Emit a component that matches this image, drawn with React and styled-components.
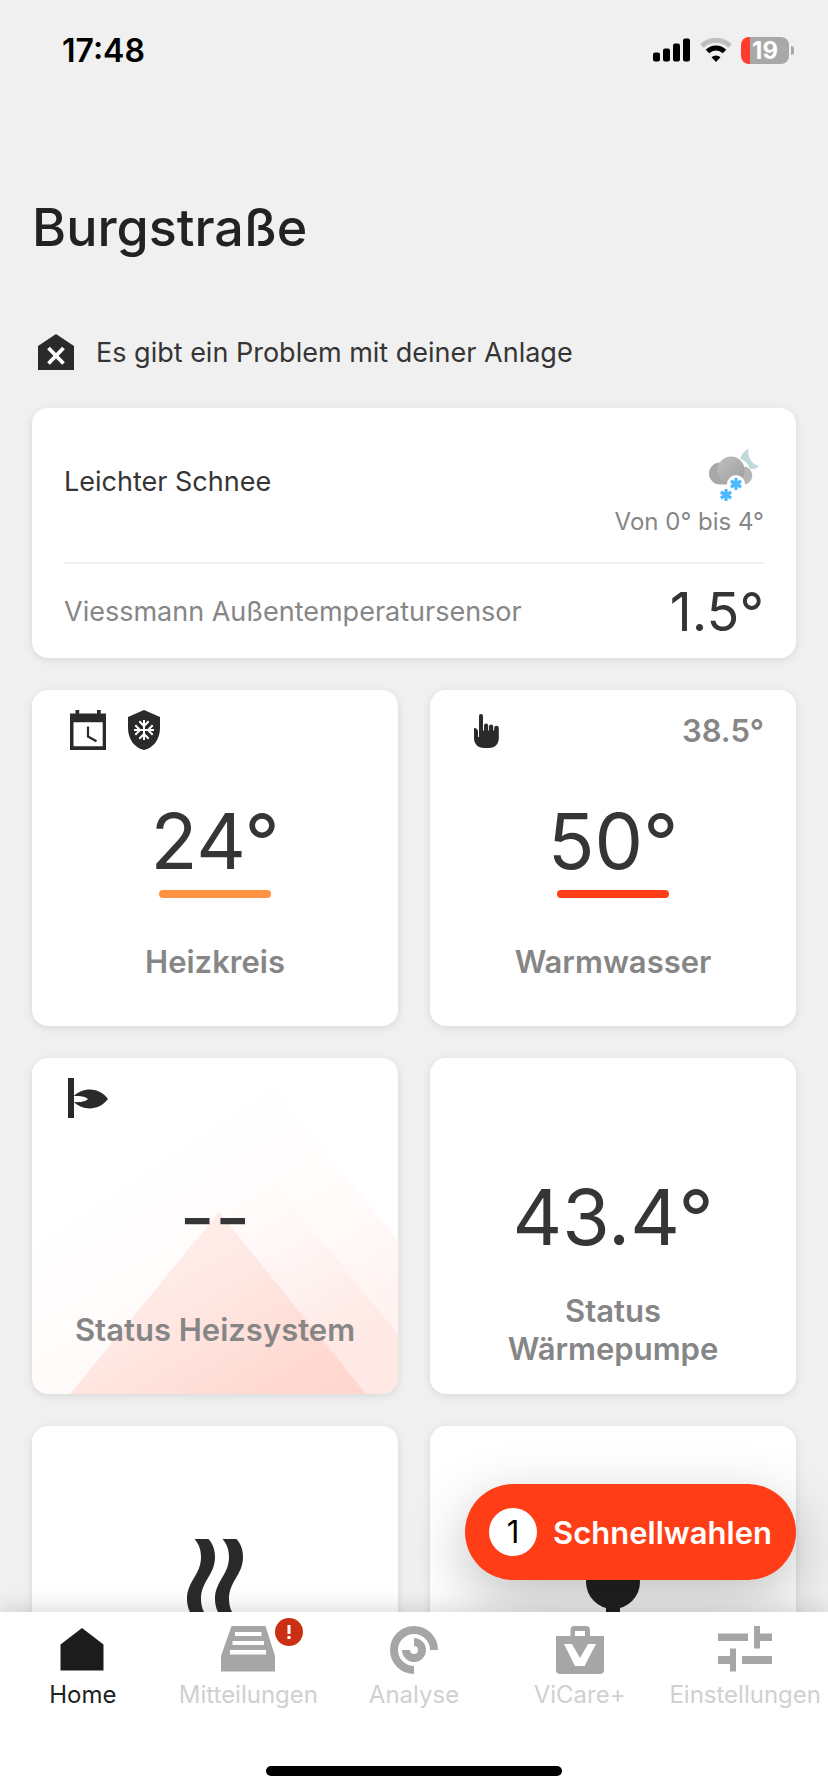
import React from 'react'
import styled, { createGlobalStyle } from 'styled-components'

const App = () => {
    return (
        <Screen>
            <GlobalStyle />
            <StatusBar>
                <Time>17:48</Time>
                <StatusIcons>
                    <SignalIcon />
                    <WifiIcon />
                    <Battery>
                        <BatteryBody>19</BatteryBody>
                        <BatteryTip />
                    </Battery>
                </StatusIcons>
            </StatusBar>

            <Content>
                <Title>Burgstraße</Title>
                <Alert>
                    <HouseAlertIcon />
                    Es gibt ein Problem mit deiner Anlage
                </Alert>

                <WeatherCard>
                    <Forecast>
                        <Condition>Leichter Schnee</Condition>
                        <ForecastSide>
                            <SnowIcon />
                            <Range>Von 0° bis 4°</Range>
                        </ForecastSide>
                    </Forecast>
                    <Sensor>
                        <SensorName>Viessmann Außentemperatursensor</SensorName>
                        <SensorValue>1.5°</SensorValue>
                    </Sensor>
                </WeatherCard>

                <Tiles>
                    <Tile>
                        <TileHeader>
                            <CalendarIcon />
                            <FrostIcon />
                        </TileHeader>
                        <TileBody>
                            <Value>24°</Value>
                            <Bar $color="#ff9243" />
                        </TileBody>
                        <Label>Heizkreis</Label>
                    </Tile>
                    <Tile>
                        <TileHeader>
                            <HandIcon />
                            <Current>38.5°</Current>
                        </TileHeader>
                        <TileBody>
                            <Value>50°</Value>
                            <Bar $color="#ff3e17" />
                        </TileBody>
                        <Label>Warmwasser</Label>
                    </Tile>
                    <Tile>
                        <HeatBackdrop />
                        <TileHeader>
                            <BurnerIcon />
                        </TileHeader>
                        <TileBody>
                            <Value>--</Value>
                        </TileBody>
                        <Label>Status Heizsystem</Label>
                    </Tile>
                    <Tile>
                        <TileHeader />
                        <TileBody>
                            <Value>43.4°</Value>
                        </TileBody>
                        <Label>Status Wärmepumpe</Label>
                    </Tile>
                    <Tile>
                        <TileHeader />
                        <TileBody>
                            <SteamIcon />
                        </TileBody>
                        <Label />
                    </Tile>
                    <Tile>
                        <TileHeader />
                        <TileBody>
                            <PlugIcon />
                        </TileBody>
                        <Label />
                    </Tile>
                </Tiles>
            </Content>

            <Footer>
                <QuickButton type="button">
                    <QuickCount>1</QuickCount>
                    Schnellwahlen
                </QuickButton>
                <Nav>
                    <NavItem href="#home" $active>
                        <HomeIcon />
                        Home
                    </NavItem>
                    <NavItem href="#mitteilungen">
                        <IconWrap>
                            <InboxIcon />
                            <Badge>
                                <BadgeIcon />
                            </Badge>
                        </IconWrap>
                        Mitteilungen
                    </NavItem>
                    <NavItem href="#analyse">
                        <AnalyseIcon />
                        Analyse
                    </NavItem>
                    <NavItem href="#vicare">
                        <CaseIcon />
                        ViCare+
                    </NavItem>
                    <NavItem href="#einstellungen">
                        <SlidersIcon />
                        Einstellungen
                    </NavItem>
                </Nav>
                <HomeIndicator />
            </Footer>
        </Screen>
    )
}

export default App

/* Icons */

const SignalIcon = () => (
    <svg width="38" height="24" viewBox="0 0 38 24">
        <rect x="0" y="14.5" width="7" height="9" rx="2" />
        <rect x="10" y="10.5" width="7" height="13" rx="2" />
        <rect x="20" y="5.5" width="7" height="18" rx="2" />
        <rect x="30" y="0.5" width="7" height="23" rx="2" />
    </svg>
)

const WifiIcon = () => (
    <svg width="32" height="24" viewBox="0 0 32 24" fill="none">
        <path d="M2 8A20 20 0 0 1 30 8" stroke="#bfbfbf" strokeWidth="5" />
        <path d="M7.5 13.6A12 12 0 0 1 24.5 13.6" stroke="#000" strokeWidth="5" />
        <path d="M16 24L11.5 19.3A6.5 6.5 0 0 1 20.5 19.3Z" fill="#000" />
    </svg>
)

const HouseAlertIcon = () => (
    <svg width="48" height="48" viewBox="0 0 48 48">
        <path d="M24 6L42 18V42H6V18Z" fill="#2a2a2a" />
        <path d="M16.5 20L31.5 35.5M31.5 20L16.5 35.5" stroke="#fff" strokeWidth="3.8" />
    </svg>
)

const SnowIcon = () => (
    <svg width="59" height="60" viewBox="0 0 59 60">
        <defs>
            <linearGradient id="cloud" x1="0" y1="0" x2="1" y2="1">
                <stop offset="0" stopColor="#c0c0c0" />
                <stop offset="1" stopColor="#9c9c9c" />
            </linearGradient>
        </defs>
        <path d="M43.5 3C39 5 36 9 35.5 13C39 14 43 17 44.5 22.5C49 23.5 52 22.5 54 19.5C47 19 42 11 43.5 3Z" fill="#c1d8dc" />
        <path d="M15 16.5A11 11 0 0 0 15 38.5H39V26H20Z" fill="#a8a8a8" />
        <circle cx="38" cy="29.5" r="9.3" fill="#b5b5b5" />
        <path d="M12.5 24A13.5 13.5 0 0 1 39.5 24C39.5 31 36 38.5 30 38.5H24C17 36 12.5 30 12.5 24Z" fill="url(#cloud)" />
        <circle cx="31" cy="38" r="9" fill="#fff" />
        <g stroke="#4fb9ff" strokeWidth="3.2">
            <path d="M31 32V44M25.8 35L36.2 41M25.8 41L36.2 35" />
            <path d="M21 43V55M15.8 46L26.2 52M15.8 52L26.2 46" />
        </g>
    </svg>
)

const CalendarIcon = () => (
    <svg width="40" height="40" viewBox="0 0 40 40">
        <path fillRule="evenodd" d="M2 3.5H7.5V0H11.2V3.5H29V0H32.7V3.5H38V40H2ZM5.5 12.3V36.3H34.7V12.3Z" fill="#2a2a2a" />
        <path d="M20 16.5V26.5L28.5 31.3" fill="none" stroke="#2a2a2a" strokeWidth="2.2" />
    </svg>
)

const FrostIcon = () => (
    <svg width="40" height="40" viewBox="0 0 40 40">
        <path d="M20 0L36 7V18C36 29 29.5 38 20 40C10.5 38 4 29 4 18V7Z" fill="#2a2a2a" />
        <g fill="none" stroke="#fff" strokeWidth="2">
            <path d="M20 10V30M10 20H30" />
            <path d="M15.3 11.3L20 16L24.7 11.3M15.3 28.7L20 24L24.7 28.7" />
            <path d="M11.3 15.3L16 20L11.3 24.7M28.7 15.3L24 20L28.7 24.7" />
        </g>
    </svg>
)

const HandIcon = () => (
    <svg width="40" height="40" viewBox="0 0 40 40">
        <path
            d="M13 6A2 2 0 0 1 17 6V20.5H18V15.5A2.1 2.1 0 0 1 22.2 15.5V20.5H23V16.5A2.1 2.1 0 0 1 27.2 16.5V20.5H28.2V18A2.2 2.2 0 0 1 32.8 18V28C32.8 34 29 38 23 38H18C12 38 8 34 8 28V18C10.5 18 12 19.5 12 22V27H13Z"
            fill="#2a2a2a"
        />
    </svg>
)

const BurnerIcon = () => (
    <svg width="40" height="40" viewBox="0 0 40 40">
        <rect width="6" height="40" fill="#2a2a2a" />
        <path d="M6 18C14 10 30 8 40 21C30 34 14 32 6 24C12 24.5 18 23.5 20 21C18 18.5 12 17.5 6 18Z" fill="#2a2a2a" />
    </svg>
)

const SteamIcon = () => (
    <svg width="56" height="92" viewBox="0 0 56 92" fill="#2a2a2a">
        <path d="M7.5 0H21.5C26 5 28 11 28 18C28 36 14 42 14 60C14 67 16 73 20.5 78H6.5C2 73 0 67 0 60C0 42 14 36 14 18C14 11 12 5 7.5 0Z" />
        <path d="M35.5 0H49.5C54 5 56 11 56 18C56 36 42 42 42 60C42 67 44 73 48.5 78H34.5C30 73 28 67 28 60C28 42 42 36 42 18C42 11 40 5 35.5 0Z" />
    </svg>
)

const PlugIcon = () => (
    <svg width="54" height="92" viewBox="0 0 54 92" fill="#222">
        <circle cx="27" cy="43" r="27" />
        <rect x="20" y="66" width="14" height="26" />
    </svg>
)

const HomeIcon = () => (
    <svg width="48" height="48" viewBox="0 0 48 48">
        <path d="M23 2L44.5 18.5V44.5H1.5V18.5Z" fill="#1c1c1c" />
    </svg>
)

const InboxIcon = () => (
    <svg width="54" height="48" viewBox="0 0 54 48">
        <path fillRule="evenodd" d="M10.5 0H44.5L54 30V45.5H0V30ZM14 6V10H40.5V6ZM11.5 15V19H43V15ZM9 24V28.5H45V24Z" fill="#a6a6a6" />
    </svg>
)

const BadgeIcon = () => (
    <svg width="28" height="28" viewBox="0 0 28 28" fill="#fff">
        <path d="M12.5 7H15.5V16H12.5ZM12.5 18H15.5V21H12.5Z" />
    </svg>
)

const AnalyseIcon = () => (
    <svg width="48" height="48" viewBox="0 0 48 48" fill="none" stroke="#a6a6a6" strokeWidth="8">
        <path d="M44 24A20 20 0 1 0 24 44" />
        <path d="M16 24A8 8 0 1 0 24 16" />
    </svg>
)

const CaseIcon = () => (
    <svg width="48" height="48" viewBox="0 0 48 48">
        <path fillRule="evenodd" d="M0 10H14.5V4A4 4 0 0 1 18.5 0H30A4 4 0 0 1 34 4V10H48V44A4 4 0 0 1 44 48H4A4 4 0 0 1 0 44ZM19 5V10H29V5Z" fill="#a6a6a6" />
        <path d="M8 18H16L24 32L32 18H40L28.5 40H19Z" fill="#fff" />
    </svg>
)

const SlidersIcon = () => (
    <svg width="54" height="48" viewBox="0 0 54 48" fill="#a6a6a6">
        <path d="M0 7.5H30V15H0ZM36 0H42V7.5H54V15H42V22.5H36Z" />
        <path d="M24 30H54V38H24ZM12 22.5H18V45.5H12V38H0V30H12Z" />
    </svg>
)

const HeatBackdrop = () => (
    <Backdrop viewBox="0 0 366 336" preserveAspectRatio="none">
        <defs>
            <linearGradient id="wide" gradientUnits="userSpaceOnUse" x1="145" y1="100" x2="275" y2="316">
                <stop offset="0" stopColor="#ff3e17" stopOpacity="0.005" />
                <stop offset="0.5" stopColor="#ff3e17" stopOpacity="0.02" />
                <stop offset="1" stopColor="#ff3e17" stopOpacity="0.07" />
            </linearGradient>
            <linearGradient id="middle" gradientUnits="userSpaceOnUse" x1="205" y1="140" x2="295" y2="290">
                <stop offset="0" stopColor="#ff3e17" stopOpacity="0" />
                <stop offset="1" stopColor="#ff3e17" stopOpacity="0.05" />
            </linearGradient>
            <linearGradient id="front" gradientUnits="userSpaceOnUse" x1="170" y1="160" x2="285" y2="352">
                <stop offset="0" stopColor="#ff3e17" stopOpacity="0.08" />
                <stop offset="1" stopColor="#ff3e17" stopOpacity="0.15" />
            </linearGradient>
        </defs>
        <path d="M242 30L366 182V336H0V190Z" fill="url(#wide)" />
        <path d="M241 122L366 277V336H334L187 154Z" fill="url(#middle)" />
        <path d="M187 154L334 336H38Z" fill="url(#front)" />
    </Backdrop>
)

/* Styles */

const GlobalStyle = createGlobalStyle`
    * {
        box-sizing: border-box;
    }

    body {
        margin: 0;
        background-color: #f0f0f0;
        font-family: 'Inter', sans-serif;
        color: #353535;
    }

    svg {
        display: block;
        flex-shrink: 0;
    }
`

const Screen = styled.div`
    display: flex;
    flex-direction: column;
    height: 100vh;
`

const StatusBar = styled.header`
    display: flex;
    justify-content: space-between;
    align-items: center;
    flex-shrink: 0;
    height: 100px;
    padding: 0 34px 0 62px;
    color: black;
`

const Time = styled.span`
    font-size: 32px;
    font-weight: 600;
`

const StatusIcons = styled.div`
    display: flex;
    align-items: center;
    gap: 9px;
`

const Battery = styled.div`
    display: flex;
    align-items: center;
    gap: 2px;
`

const BatteryBody = styled.div`
    width: 48px;
    height: 27px;
    border-radius: 8px;
    background: linear-gradient(to right, #ff3b30 9px, #a8a8a8 9px);
    color: white;
    font-size: 24px;
    font-weight: 700;
    line-height: 27px;
    text-align: center;
`

const BatteryTip = styled.div`
    width: 3px;
    height: 9px;
    border-radius: 0 4px 4px 0;
    background-color: #a8a8a8;
`

const Content = styled.main`
    flex: 1;
    min-height: 0;
    overflow-y: auto;
    scrollbar-width: none;
    padding: 96px 32px 0;
`

const Title = styled.h1`
    margin: 0 0 68px;
    font-size: 52px;
    font-weight: 500;
    line-height: 64px;
    color: #222222;
`

const Alert = styled.div`
    display: flex;
    align-items: center;
    gap: 16px;
    margin-bottom: 32px;
    font-size: 27px;
`

const Card = styled.section`
    border-radius: 16px;
    background-color: white;
    box-shadow: 0 2px 8px rgba(0, 0, 0, 0.1);
`

const WeatherCard = styled(Card)`
    margin-bottom: 32px;
    padding: 0 32px;
`

const Forecast = styled.div`
    display: flex;
    justify-content: space-between;
    padding: 38px 0 24px;
    border-bottom: 2px solid #efefef;
`

const Condition = styled.span`
    padding-top: 20px;
    font-size: 27px;
    line-height: 32px;
`

const ForecastSide = styled.div`
    display: flex;
    flex-direction: column;
    align-items: flex-end;
`

const Range = styled.span`
    font-size: 24px;
    line-height: 32px;
    color: #868686;
`

const Sensor = styled.div`
    display: flex;
    justify-content: space-between;
    align-items: center;
    height: 94px;
`

const SensorName = styled.span`
    font-size: 27px;
    color: #868686;
`

const SensorValue = styled.span`
    font-size: 54px;
`

const Tiles = styled.div`
    display: grid;
    grid-template-columns: 1fr 1fr;
    gap: 32px;
    padding-bottom: 32px;
`

const Tile = styled(Card)`
    position: relative;
    display: flex;
    flex-direction: column;
    min-height: 336px;
    padding: 20px 32px 26px;
`

const TileHeader = styled.div`
    position: relative;
    display: flex;
    align-items: center;
    gap: 16px;
    height: 40px;
    margin-bottom: 24px;
    padding-left: 4px;
`

const TileBody = styled.div`
    position: relative;
    display: flex;
    flex: 1;
    flex-direction: column;
    align-items: center;
    justify-content: center;
    gap: 9px;
`

const Value = styled.span`
    font-size: 77px;
    font-weight: 400;
    line-height: 80px;
`

const Bar = styled.div`
    width: 112px;
    height: 8px;
    border-radius: 4px;
    background-color: ${({ $color }) => $color};
`

const Label = styled.h2`
    position: relative;
    display: flex;
    align-items: center;
    justify-content: center;
    height: 76px;
    margin: 0;
    font-size: 31px;
    font-weight: 600;
    line-height: 38px;
    text-align: center;
    color: #868686;
`

const Current = styled.span`
    margin-left: auto;
    font-size: 31px;
    font-weight: 600;
    color: #868686;
`

const Backdrop = styled.svg`
    position: absolute;
    inset: 0;
    width: 100%;
    height: 100%;
    border-radius: 16px;
`

const Footer = styled.footer`
    position: relative;
    flex-shrink: 0;
    height: 180px;
    background-color: white;
    box-shadow: 0 0 24px rgba(0, 0, 0, 0.18);
`

const QuickButton = styled.button`
    position: absolute;
    right: 32px;
    bottom: calc(100% + 32px);
    display: flex;
    align-items: center;
    gap: 16px;
    height: 96px;
    padding: 0 24px;
    border: none;
    border-radius: 48px;
    background-color: #ff3e17;
    box-shadow: 0 20px 60px rgba(0, 0, 0, 0.25);
    color: white;
    font-family: inherit;
    font-size: 31px;
    font-weight: 600;
`

const QuickCount = styled.span`
    width: 48px;
    height: 48px;
    border-radius: 50%;
    background-color: white;
    color: black;
    font-weight: 400;
    line-height: 48px;
    text-align: center;
`

const Nav = styled.nav`
    position: relative;
    display: grid;
    grid-template-columns: repeat(5, 1fr);
    height: 154px;
    padding-top: 14px;
    background-color: white;
`

const NavItem = styled.a`
    display: flex;
    flex-direction: column;
    align-items: center;
    gap: 5px;
    font-size: 24px;
    line-height: 32px;
    text-decoration: none;
    color: ${({ $active }) => ($active ? '#222222' : '#d0d0d0')};
`

const IconWrap = styled.div`
    position: relative;
`

const Badge = styled.span`
    position: absolute;
    top: -8px;
    left: 54px;
    width: 28px;
    height: 28px;
    border-radius: 50%;
    background-color: #cc3014;
`

const HomeIndicator = styled.div`
    width: 296px;
    height: 10px;
    margin: 0 auto;
    border-radius: 5px;
    background-color: black;
`
